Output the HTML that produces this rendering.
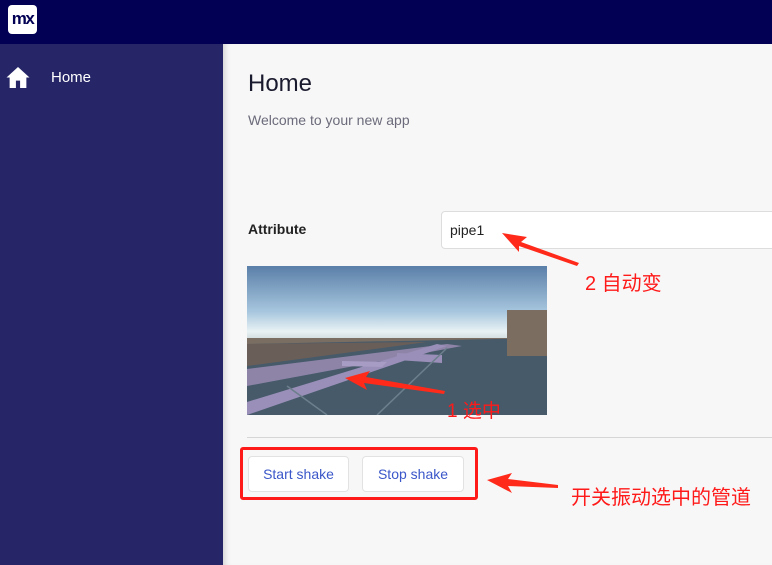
<!DOCTYPE html>
<html><head><meta charset="utf-8"><style>
*{margin:0;padding:0;box-sizing:border-box}
body{width:772px;height:565px;overflow:hidden;background:#f7f7f7;font-family:"Liberation Sans","Noto Sans CJK SC",sans-serif;position:relative}
.hdr{position:absolute;left:0;top:0;width:772px;height:44px;background:#020054}
.logo{position:absolute;left:8px;top:5px;width:29px;height:29px;background:#fff;border-radius:4px;color:#020054;font-weight:900;font-size:17px;line-height:28px;text-align:center;letter-spacing:-1.5px}
.side{position:absolute;left:0;top:44px;width:223px;height:521px;background:#252567}
.main{position:absolute;left:223px;top:44px;width:549px;height:521px;background:#f7f7f7;box-shadow:inset 6px 0 6px -4px rgba(0,0,0,.15)}
.abs{position:absolute}
.btn{position:absolute;top:456px;height:36px;background:#fff;border:1px solid #e2e2e2;border-radius:4px;color:#3b57c9;font-size:14px;line-height:34px;text-align:center}
.red{color:#ff1a1a;font-size:20px;position:absolute;white-space:nowrap}
</style></head><body>
<div class="hdr"><div class="logo">mx</div></div>
<div class="side">
<svg class="abs" style="left:6px;top:22px" width="24" height="23" viewBox="0 0 22 22"><path d="M11 1 L22 11 H19 V21 H13 V14 H9 V21 H3 V11 H0 Z" fill="#fff"/></svg>
<div class="abs" style="left:51px;top:25px;color:#fff;font-size:15px">Home</div>
</div>
<div class="main"></div>
<div class="abs" style="left:248px;top:70px;font-size:24px;color:#1a1a2e">Home</div>
<div class="abs" style="left:248px;top:112px;font-size:14px;color:#6b6b7b">Welcome to your new app</div>
<div class="abs" style="left:248px;top:221px;font-size:14px;font-weight:bold;color:#222">Attribute</div>
<div class="abs" style="left:441px;top:211px;width:335px;height:38px;background:#fff;border:1px solid #ddd;border-radius:4px;font-size:14px;line-height:36px;padding-left:8px;color:#222">pipe1</div>
<svg class="abs" style="left:247px;top:266px" width="300" height="149" viewBox="0 0 300 149">
<defs><linearGradient id="sky" x1="0" y1="0" x2="0" y2="1"><stop offset="0" stop-color="#5a7fa8"/><stop offset=".6" stop-color="#a7c6de"/><stop offset=".86" stop-color="#e8f2f4"/><stop offset="1" stop-color="#c8d4d8"/></linearGradient></defs>
<rect width="300" height="76" fill="url(#sky)"/>
<rect y="72" width="300" height="6" fill="#7a6e62"/>
<polygon points="0,78 300,72 300,149 0,149" fill="#465a6a"/>
<polygon points="0,78 180,76 0,100" fill="#6a5e58"/>
<rect x="260" y="44" width="40" height="46" fill="#7b6e60"/>
<polygon points="0,103 200,78 215,80 0,120" fill="#8e84a8"/>
<polygon points="0,136 190,78 200,80 0,149" fill="#9a8fb8"/>
<polygon points="95,95 140,96 135,101 95,100" fill="#a79cc4"/>
<polygon points="150,87 195,89 195,97 150,94" fill="#9a8fb8"/>
<line x1="40" y1="120" x2="80" y2="149" stroke="#6c7f8c" stroke-width="1.5"/>
<line x1="130" y1="149" x2="200" y2="82" stroke="#6c7f8c" stroke-width="1.5"/>
</svg>
<div class="abs" style="left:247px;top:437px;width:525px;height:1px;background:#d6d6d6"></div>
<div class="abs" style="left:240px;top:447px;width:238px;height:53px;border:3px solid #ff1a1a;border-radius:3px"></div>
<div class="btn" style="left:248px;width:101px">Start shake</div>
<div class="btn" style="left:362px;width:102px">Stop shake</div>
<svg class="abs" style="left:0;top:0" width="772" height="565">
<g fill="#ff2a1a">
<polygon points="345,378 370,371 366,377 445,391 444,394 364,383 367,390"/>
<polygon points="502,233 527,237 521,242 579,263 577,266 519,246 519,252"/>
<polygon points="487,480 512,473 508,479 558,485 558,488 508,486 512,493"/>
</g>
</svg>
<div class="red" style="left:585px;top:267px">2 自动变</div>
<div class="red" style="left:447px;top:396px;font-size:19px">1 选中</div>
<div class="red" style="left:571px;top:481px">开关振动选中的管道</div>
</body></html>
